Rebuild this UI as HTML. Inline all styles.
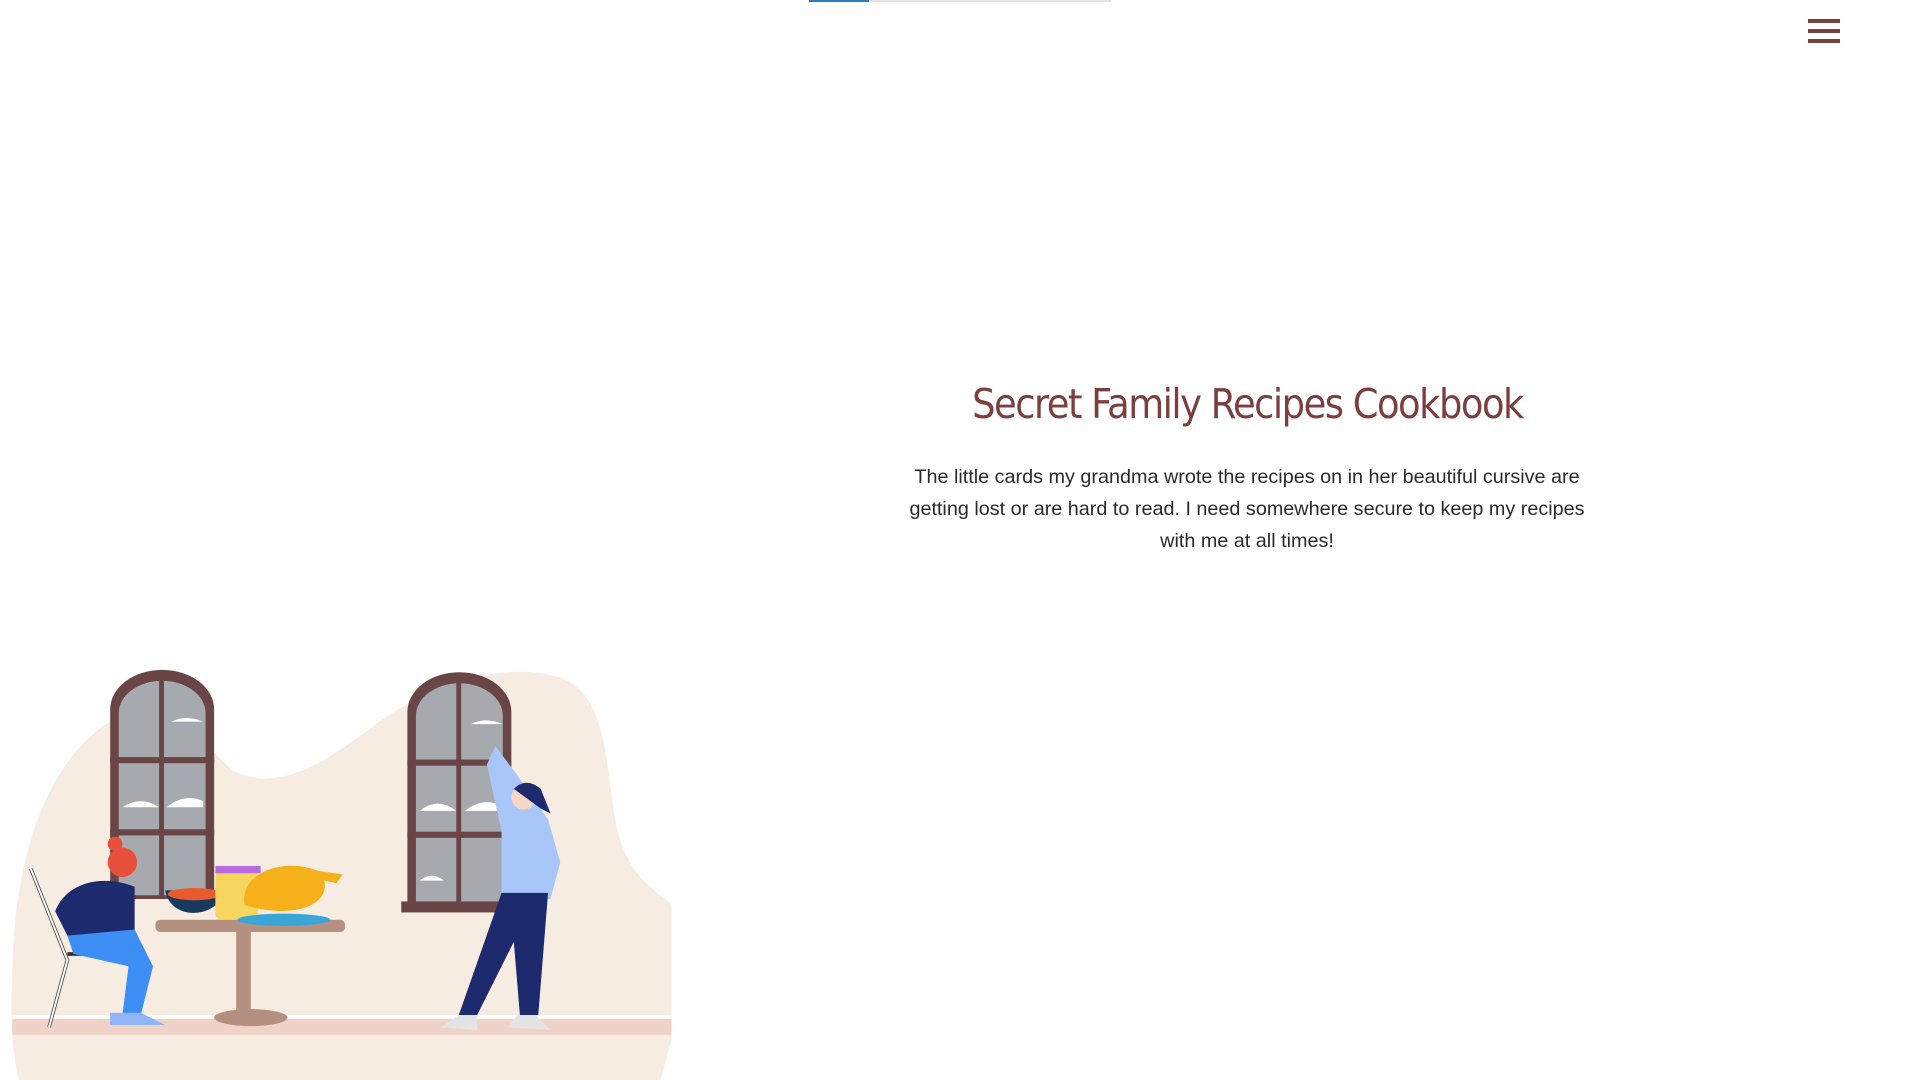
<!DOCTYPE html>
<html><head><meta charset="utf-8"><style>
html,body{margin:0;padding:0;background:#fff;width:1918px;height:1080px;overflow:hidden;position:relative;font-family:"Liberation Sans",sans-serif}
.bar{position:absolute;left:809px;top:0;width:302px;height:2px;background:#e4e4e4}
.bar i{position:absolute;left:0;top:0;width:60px;height:2px;background:#2a7bc0}
.ham{position:absolute;left:1808px;top:19px;width:32px}
.ham b{display:block;height:4px;background:#7c3f3f;margin-bottom:6px}
h1{position:absolute;left:885px;width:725px;top:380px;margin:0;text-align:center;font-family:"DejaVu Sans Condensed","Liberation Sans Narrow",sans-serif;font-weight:normal;font-size:41px;color:#7c3f3f;letter-spacing:-1.5px}
p{position:absolute;left:897px;width:700px;top:461px;margin:0;text-align:center;font-size:19.8px;line-height:32.2px;color:#2a2a2a}
svg{position:absolute;left:0;top:0}
</style></head><body>
<div class="bar"><i></i></div>
<div class="ham"><b></b><b></b><b></b></div>
<h1>Secret Family Recipes Cookbook</h1>
<p>The little cards my grandma wrote the recipes on in her beautiful cursive are getting lost or are hard to read. I need somewhere secure to keep my recipes with me at all times!</p>
<svg width="1896" height="1080" viewBox="0 0 1550 883">
<path d="M10,800 C10,700 40,620 90,590 C130,570 160,600 190,630 C230,650 270,620 310,590 C360,555 420,540 460,555 C500,570 495,640 505,680 C515,720 540,730 549,740 L549,850 L540,883 L15,883 C10,860 8,830 10,800Z" fill="#f7ece1"/>
<rect x="10" y="832" width="539" height="14" fill="#f0d3c8"/>
<rect x="10" y="830" width="539" height="3" fill="#fff"/>
<g>
<path d="M90,735 V580 A42,32 0 0 1 175,580 V735Z" fill="#6a4545"/>
<path d="M97,732 V583 A35,26 0 0 1 168,583 V732Z" fill="#a6a9ad"/>
<rect x="130" y="555" width="4" height="180" fill="#6a4545"/>
<rect x="90" y="619" width="85" height="5" fill="#6a4545"/><rect x="90" y="678" width="85" height="5" fill="#6a4545"/>
<path d="M100,660 q15,-10 30,0 z M136,660 q15,-12 30,-5 v5z M140,590 q12,-6 26,0z" fill="#fff"/>
</g>
<g>
<path d="M333,745 V582 A42,32 0 0 1 418,582 V745Z" fill="#6a4545"/>
<path d="M340,738 V585 A35,26 0 0 1 411,585 V738Z" fill="#a6a9ad"/>
<rect x="373" y="556" width="4" height="185" fill="#6a4545"/>
<rect x="333" y="621" width="85" height="5" fill="#6a4545"/><rect x="333" y="680" width="85" height="5" fill="#6a4545"/>
<rect x="328" y="737" width="80" height="9" fill="#6a4545"/>
<path d="M343,663 q15,-12 30,0z M380,663 q15,-12 30,-4 v4z M385,592 q12,-6 26,0z M343,720 q10,-8 20,0z" fill="#fff"/>
</g>
<path d="M25,710 L55,785 L40,840" stroke="#555" stroke-width="3" fill="none"/>
<path d="M25,710 L55,785 L40,840" stroke="#fff" stroke-width="1.5" fill="none"/>
<path d="M55,780 H100" stroke="#333" stroke-width="3"/>
<path d="M45,745 C55,720 85,715 110,725 L110,770 L60,775Z" fill="#1e2a6e"/>
<path d="M55,765 L110,760 L125,790 L115,830 L100,830 L105,790 L60,780Z" fill="#3d8ef5"/>
<path d="M90,828 h25 l20,10 h-45z" fill="#8fb4f7"/>
<circle cx="100" cy="705" r="12" fill="#e8503c"/><circle cx="94" cy="690" r="6" fill="#e8503c"/>
<rect x="127" y="752" width="155" height="10" rx="4" fill="#b59080"/>
<rect x="193" y="760" width="12" height="70" fill="#b59080"/>
<ellipse cx="205" cy="832" rx="30" ry="7" fill="#b59080"/>
<path d="M135,728 H183 C180,750 140,755 135,728Z" fill="#1a3a5c"/><ellipse cx="159" cy="731" rx="22" ry="5" fill="#e85b2e"/>
<rect x="176" y="712" width="35" height="40" rx="5" fill="#f7d660"/><rect x="176" y="708" width="37" height="6" fill="#b86be0"/>
<ellipse cx="232" cy="752" rx="38" ry="5" fill="#3aa6d8"/>
<path d="M200,740 C195,715 230,700 260,712 L280,715 L275,722 L265,720 C270,740 240,752 200,740Z" fill="#f5b01a"/>
<path d="M420,630 L405,610 L398,625 L410,680 L410,735 L450,735 L458,705 L448,670 Z" fill="#a8c6f7"/>
<circle cx="428" cy="652" r="10" fill="#f7d5c7"/><path d="M420,645 q10,-10 22,0 l8,20 -8,-4z" fill="#1e2a6e"/>
<path d="M410,730 L448,730 L440,830 L425,830 L420,770 L390,830 L375,830Z" fill="#1e2a6e"/>
<path d="M360,840 l15,-10 h15 v12z M415,840 l8,-10 h15 l12,12z" fill="#e4e4e4"/>
</svg>
</body></html>
